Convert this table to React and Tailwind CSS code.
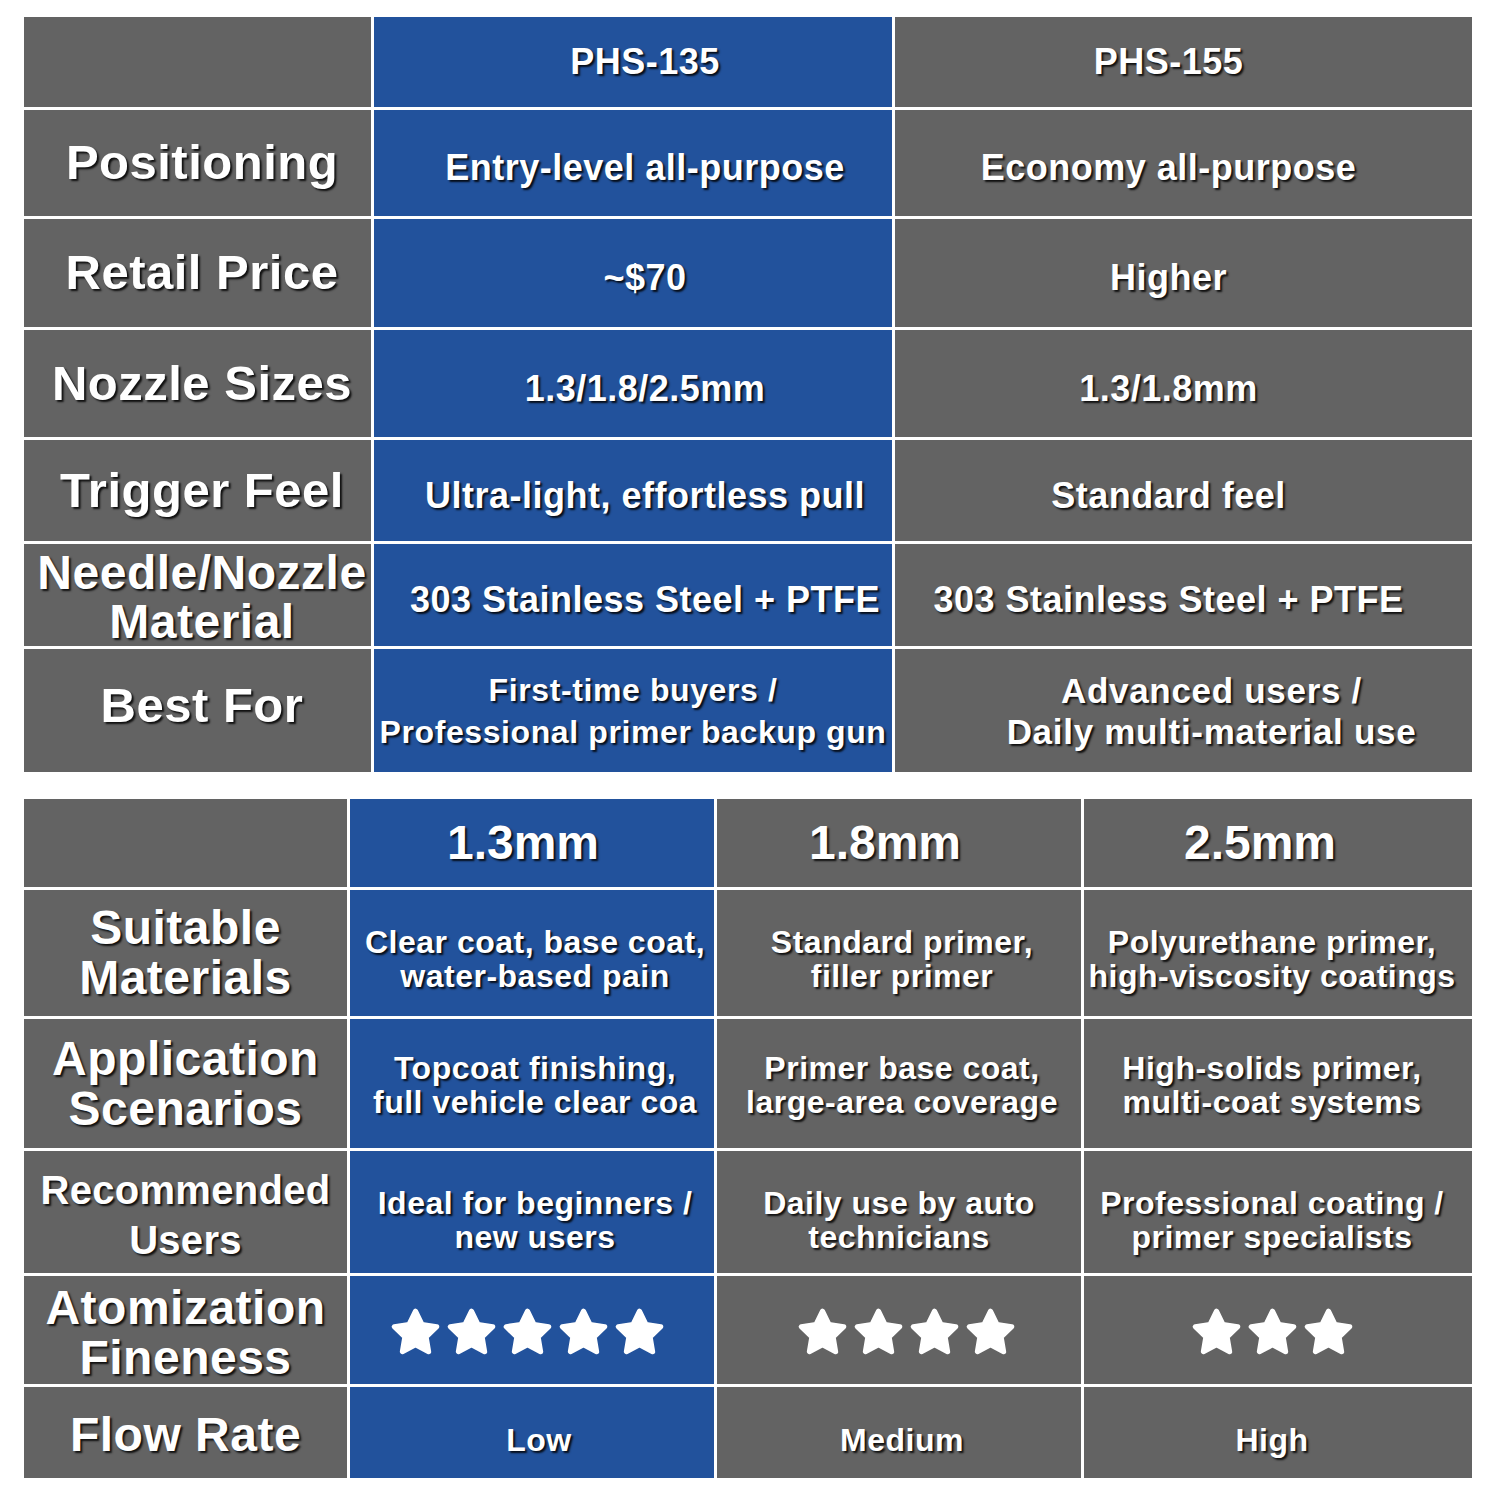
const shadow = '[text-shadow:2px_2px_2px_rgba(0,0,0,0.85)]'
const gray = 'bg-[#636363]'
const blue = 'bg-[#22529c]'

const specRows = [
  { label: ['Positioning'], a: ['Entry-level all-purpose'], b: ['Economy all-purpose'] },
  { label: ['Retail Price'], a: ['~$70'], b: ['Higher'] },
  { label: ['Nozzle Sizes'], a: ['1.3/1.8/2.5mm'], b: ['1.3/1.8mm'] },
  { label: ['Trigger Feel'], a: ['Ultra-light, effortless pull'], b: ['Standard feel'] },
]

const nozzleRows = [
  {
    label: ['Suitable', 'Materials'],
    pad: 'pt-[12px]',
    cells: [
      ['Clear coat, base coat,', 'water-based pain'],
      ['Standard primer,', 'filler primer'],
      ['Polyurethane primer,', 'high-viscosity coatings'],
    ],
  },
  {
    label: ['Application', 'Scenarios'],
    pad: 'pt-[2px]',
    cells: [
      ['Topcoat finishing,', 'full vehicle clear coa'],
      ['Primer base coat,', 'large-area coverage'],
      ['High-solids primer,', 'multi-coat systems'],
    ],
  },
]

const Lines = ({ lines }) => lines.map((l, i) => <div key={i}>{l}</div>)

const Star = () => (
  <svg width="51" height="51" viewBox="0 0 24 24">
    <polygon
      points="12,2 15.09,8.26 22,9.27 17,14.14 18.18,21.02 12,17.77 5.82,21.02 7,14.14 2,9.27 8.91,8.26"
      fill="#fff"
      stroke="#fff"
      strokeWidth="2.4"
      strokeLinejoin="round"
    />
  </svg>
)

const Stars = ({ n }) => (
  <div className="flex gap-[5px]">
    {Array.from({ length: n }).map((_, i) => <Star key={i} />)}
  </div>
)

const cell = 'flex flex-col items-center justify-center text-center whitespace-nowrap'

export default function App() {
  return (
    <div
      className={`bg-white w-[1500px] h-[1500px] pt-[17px] px-[24px] text-white font-bold ${shadow}`}
      style={{ fontFamily: '"Liberation Sans", Arial, sans-serif' }}
    >
      {/* model comparison */}
      <div className="grid grid-cols-[347px_518px_577px] grid-rows-[90px_106px_108px_107px_101px_102px_123px] gap-[3px]">
        <div className={gray} />
        <div className={`${cell} ${blue} pl-[24px] text-[36px] tracking-[0.5px]`}>PHS-135</div>
        <div className={`${cell} ${gray} pr-[30px] text-[36px] tracking-[0.5px]`}>PHS-155</div>

        {specRows.map((r, i) => (
          <div key={i} className="contents">
            <div className={`${cell} ${gray} pl-[9px] text-[49px] tracking-[0.5px]`}>
              <Lines lines={r.label} />
            </div>
            <div className={`${cell} ${blue} pl-[24px] pt-[10px] text-[36px] tracking-[0.5px]`}>
              <Lines lines={r.a} />
            </div>
            <div className={`${cell} ${gray} pr-[30px] pt-[10px] text-[36px] tracking-[0.5px]`}>
              <Lines lines={r.b} />
            </div>
          </div>
        ))}

        <div className={`${cell} ${gray} pl-[9px] pt-[4px] text-[48px] leading-[49px] tracking-[0.5px]`}>
          <div>Needle/Nozzle</div>
          <div>Material</div>
        </div>
        <div className={`${cell} ${blue} pl-[24px] pt-[10px] text-[36px] tracking-[0.5px]`}>
          303 Stainless Steel + PTFE
        </div>
        <div className={`${cell} ${gray} pr-[30px] pt-[10px] text-[36px] tracking-[0.5px]`}>
          303 Stainless Steel + PTFE
        </div>

        <div className={`${cell} ${gray} pl-[9px] pb-[10px] text-[49px] tracking-[0.5px]`}>Best For</div>
        <div className={`${cell} ${blue} text-[32px] leading-[42px] tracking-[0.6px]`}>
          <div>First-time buyers /</div>
          <div>Professional primer backup gun</div>
        </div>
        <div className={`${cell} ${gray} pl-[56px] text-[35px] leading-[41px] tracking-[0.7px]`}>
          <div>Advanced users /</div>
          <div>Daily multi-material use</div>
        </div>
      </div>

      {/* nozzle comparison */}
      <div className="mt-[27px] grid grid-cols-[323px_364px_364px_388px] grid-rows-[88px_126px_129px_122px_108px_91px] gap-[3px]">
        <div className={gray} />
        <div className={`${cell} ${blue} pr-[18px] text-[48px]`}>1.3mm</div>
        <div className={`${cell} ${gray} pr-[28px] text-[48px]`}>1.8mm</div>
        <div className={`${cell} ${gray} pr-[36px] text-[48px]`}>2.5mm</div>

        {nozzleRows.map((r, i) => (
          <div key={i} className="contents">
            <div className={`${cell} ${gray} text-[48px] leading-[50px] tracking-[0.5px]`}>
              <Lines lines={r.label} />
            </div>
            {r.cells.map((c, j) => (
              <div
                key={j}
                className={`${cell} ${j === 0 ? blue : gray} ${j === 2 ? 'pr-[12px]' : 'pl-[6px]'} ${r.pad} text-[32px] leading-[34px] tracking-[0.5px]`}
              >
                <Lines lines={c} />
              </div>
            ))}
          </div>
        ))}

        <div className={`${cell} ${gray} pt-[6px] text-[40px] leading-[50px] tracking-[0.3px]`}>
          <div>Recommended</div>
          <div>Users</div>
        </div>
        <div className={`${cell} ${blue} pl-[6px] pt-[16px] text-[32px] leading-[34px] tracking-[0.5px]`}>
          <div>Ideal for beginners /</div>
          <div>new users</div>
        </div>
        <div className={`${cell} ${gray} pt-[16px] text-[32px] leading-[34px] tracking-[0.5px]`}>
          <div>Daily use by auto</div>
          <div>technicians</div>
        </div>
        <div className={`${cell} ${gray} pr-[12px] pt-[16px] text-[32px] leading-[34px] tracking-[0.5px]`}>
          <div>Professional coating /</div>
          <div>primer specialists</div>
        </div>

        <div className={`${cell} ${gray} pt-[6px] text-[48px] leading-[50px] tracking-[0.5px]`}>
          <div>Atomization</div>
          <div>Fineness</div>
        </div>
        <div className={`${cell} ${blue} pt-[4px] pr-[10px]`}>
          <Stars n={5} />
        </div>
        <div className={`${cell} ${gray} pt-[4px] pl-[14px]`}>
          <Stars n={4} />
        </div>
        <div className={`${cell} ${gray} pt-[4px] pr-[12px]`}>
          <Stars n={3} />
        </div>

        <div className={`${cell} ${gray} pt-[4px] text-[48px] tracking-[0.5px]`}>Flow Rate</div>
        <div className={`${cell} ${blue} pl-[14px] pt-[14px] text-[32px] tracking-[0.5px]`}>Low</div>
        <div className={`${cell} ${gray} pl-[6px] pt-[14px] text-[32px] tracking-[0.5px]`}>Medium</div>
        <div className={`${cell} ${gray} pr-[12px] pt-[14px] text-[32px] tracking-[0.5px]`}>High</div>
      </div>
    </div>
  )
}
